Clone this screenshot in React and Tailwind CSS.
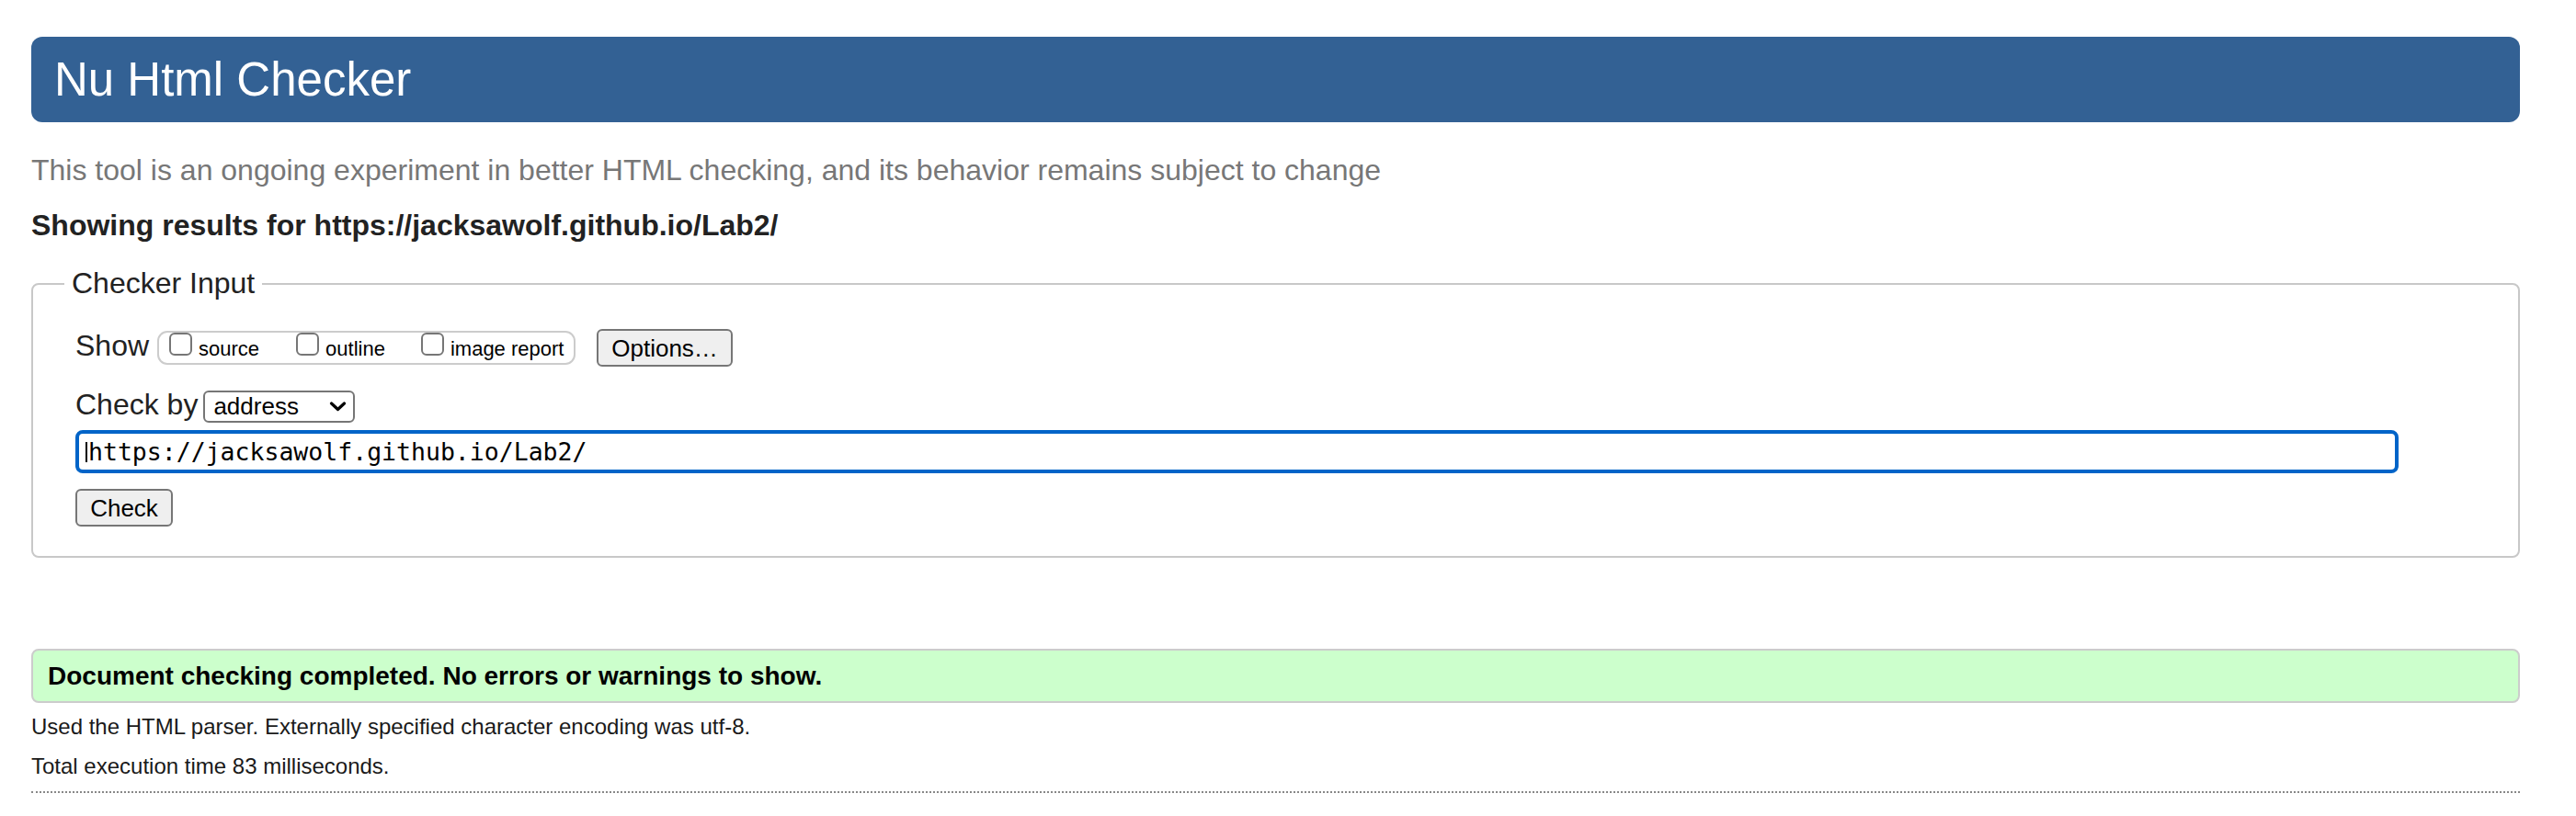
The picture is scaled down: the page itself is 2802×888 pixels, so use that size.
import React from "react";

const OPTIONS = [
  { label: "source", gap: "ml-0" },
  { label: "outline", gap: "ml-[40px]" },
  { label: "image report", gap: "ml-[39px]" },
];

function Checkbox({ label, gap }) {
  return (
    <div className={`flex items-end ${gap}`}>
      <span className="block w-[25px] h-[25px] rounded-[6px] border-2 border-[#767676] bg-white" />
      <span className="ml-[7px] -mb-[4px] text-[22px] leading-[22px] text-black">{label}</span>
    </div>
  );
}

export default function App() {
  return (
    <div className="min-h-[888px] bg-white pt-[40px] pl-[34px] pr-[61px] font-['Liberation_Sans',Arial,sans-serif]">
      <h1 className="h-[93px] rounded-[12px] bg-[#336194] pl-[25px] text-[51px] leading-[93px] text-white">
        Nu Html Checker
      </h1>

      <p className="mt-[34px] text-[32px] leading-[37px] text-[#777777]">
        This tool is an ongoing experiment in better HTML checking, and its behavior remains subject to change
      </p>
      <p className="mt-[23px] text-[32px] leading-[37px] font-bold text-[#222222]">
        Showing results for https://jacksawolf.github.io/Lab2/
      </p>

      <fieldset className="mt-[26px] rounded-[8px] border-2 border-[#c8c8c8] pl-[34px] pt-[31px] pb-[32px]">
        <legend className="px-[8px] text-[32px] leading-[37px] text-[#222222]">Checker Input</legend>
        <div className="pl-[12px]">
          {/* show row */}
          <div className="flex h-[41px] items-center">
            <span className="mb-[4px] text-[32px] leading-[37px] text-[#222222]">Show</span>
            <div className="ml-[9px] flex h-[37px] w-[455px] items-end rounded-[11px] border-2 border-[#cccccc] pl-[11px] pb-[8px]">
              {OPTIONS.map((o) => (
                <Checkbox key={o.label} label={o.label} gap={o.gap} />
              ))}
            </div>
            <button className="ml-[23px] flex h-[41px] w-[148px] items-center justify-center rounded-[6px] border-2 border-[#767676] bg-[#efefef] text-[26px] leading-none text-black">
              Options…
            </button>
          </div>

          {/* check by row */}
          <div className="mt-[23px] flex items-baseline">
            <span className="text-[32px] leading-[37px] text-[#222222]">Check by</span>
            <div className="ml-[6px] flex h-[35px] w-[165px] items-center justify-between rounded-[6px] border-2 border-[#767676] bg-white pl-[9px] pr-[7px]">
              <span className="text-[26px] leading-[31px] text-black">address</span>
              <svg width="19" height="11" viewBox="0 0 19 11" fill="none">
                <polyline points="2.5,2 9.5,8.5 16.5,2" stroke="#000" strokeWidth="3.2" strokeLinecap="round" strokeLinejoin="round" />
              </svg>
            </div>
          </div>

          {/* address input */}
          <div className="mt-[8px] flex h-[47px] w-[2527px] items-center rounded-[8px] border-[4px] border-[#0064c8] bg-white pl-[7px]">
            <span className="block h-[22px] w-[2px] bg-black" />
            <span className="ml-[1px] font-['DejaVu_Sans_Mono',monospace] text-[26.5px] leading-[30px] text-black">
              https://jacksawolf.github.io/Lab2/
            </span>
          </div>

          <button className="mt-[17px] flex h-[41px] w-[106px] items-center justify-center rounded-[6px] border-2 border-[#767676] bg-[#efefef] text-[26px] leading-none text-black">
            Check
          </button>
        </div>
      </fieldset>

      <div className="mt-[99px] flex h-[59px] items-center rounded-[8px] border-2 border-[#cccccc] bg-[#ccffcc] pl-[16px]">
        <p className="text-[28px] leading-[32px] font-bold text-black">
          Document checking completed. No errors or warnings to show.
        </p>
      </div>

      <p className="mt-[12px] text-[24px] leading-[28px] text-[#1a1a1a]">
        Used the HTML parser. Externally specified character encoding was utf-8.
      </p>
      <p className="mt-[15px] text-[24px] leading-[28px] text-[#1a1a1a]">Total execution time 83 milliseconds.</p>
      <div className="mt-[13px] border-t-2 border-dotted border-[#888888]" />
    </div>
  );
}
